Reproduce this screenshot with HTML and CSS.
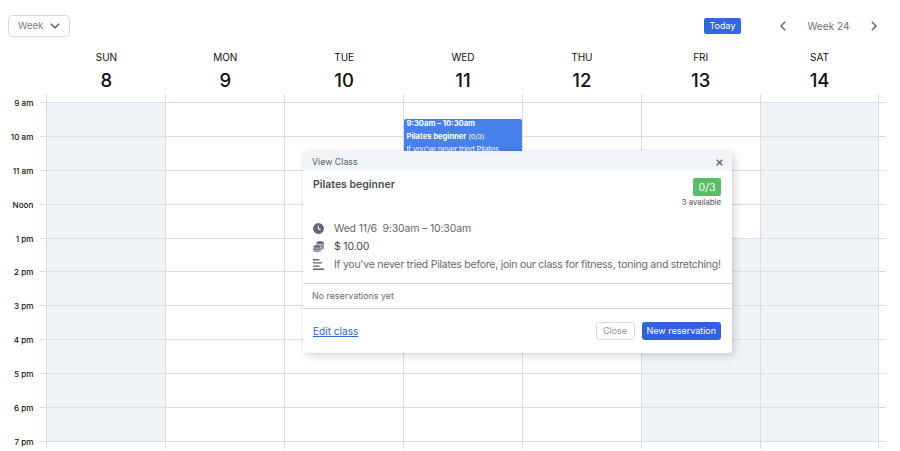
FILE: index.html
```html
<!DOCTYPE html>
<html lang="en">
<head>
<meta charset="utf-8">
<title>Class calendar</title>
<link rel="stylesheet" href="styles.css">
</head>
<body>
<header class="toolbar">
  <button class="view-select">Week
    <svg width="10" height="6" viewBox="0 0 10 6"><path d="M.8.8 5 4.9 9.2.8"/></svg>
  </button>
  <button class="today">Today</button>
  <nav class="pager">
    <svg width="6" height="10" viewBox="0 0 6 10"><path d="M5.2.8 1 5l4.2 4.2"/></svg>
    <span>Week 24</span>
    <svg width="6" height="10" viewBox="0 0 6 10"><path d="M.8.8 5 5 .8 9.2"/></svg>
  </nav>
</header>
<div class="days">
  <div class="day"><span>SUN</span><strong>8</strong></div>
  <div class="day"><span>MON</span><strong>9</strong></div>
  <div class="day"><span>TUE</span><strong>10</strong></div>
  <div class="day"><span>WED</span><strong>11</strong></div>
  <div class="day"><span>THU</span><strong>12</strong></div>
  <div class="day"><span>FRI</span><strong>13</strong></div>
  <div class="day"><span>SAT</span><strong>14</strong></div>
</div>
<main class="schedule">
  <div class="row edge"><b></b><i></i><i></i><i></i><i></i><i></i><i></i><i></i><i class="end"></i></div>
  <div class="row"><b>9 am</b><i class="off"></i><i></i><i></i><i></i><i></i><i></i><i class="off"></i><i class="end"></i></div>
  <div class="row"><b>10 am</b><i class="off"></i><i></i><i></i><i></i><i></i><i></i><i class="off"></i><i class="end"></i></div>
  <div class="row"><b>11 am</b><i class="off"></i><i></i><i></i><i></i><i></i><i></i><i class="off"></i><i class="end"></i></div>
  <div class="row"><b>Noon</b><i class="off"></i><i></i><i></i><i></i><i></i><i></i><i class="off"></i><i class="end"></i></div>
  <div class="row"><b>1 pm</b><i class="off"></i><i></i><i></i><i></i><i></i><i class="off"></i><i class="off"></i><i class="end"></i></div>
  <div class="row"><b>2 pm</b><i class="off"></i><i></i><i></i><i></i><i></i><i class="off"></i><i class="off"></i><i class="end"></i></div>
  <div class="row"><b>3 pm</b><i class="off"></i><i></i><i></i><i></i><i></i><i class="off"></i><i class="off"></i><i class="end"></i></div>
  <div class="row"><b>4 pm</b><i class="off"></i><i></i><i></i><i></i><i></i><i class="off"></i><i class="off"></i><i class="end"></i></div>
  <div class="row"><b>5 pm</b><i class="off"></i><i></i><i></i><i></i><i></i><i class="off"></i><i class="off"></i><i class="end"></i></div>
  <div class="row"><b>6 pm</b><i class="off"></i><i></i><i></i><i></i><i></i><i class="off"></i><i class="off"></i><i class="end"></i></div>
  <div class="row last"><b>7 pm</b><i></i><i></i><i></i><i></i><i></i><i></i><i></i><i class="end"></i></div>
  <article class="event">
    <div class="event-line"><strong>9:30am – 10:30am</strong></div>
    <div class="event-line"><strong>Pilates beginner</strong> <small>(0/3)</small></div>
    <div class="event-line event-text">If you've never tried Pilates</div>
  </article>
</main>
<section class="dialog">
  <header class="dialog-head">
    <span>View Class</span>
    <svg class="close-icon" width="7" height="7" viewBox="0 0 7 7"><path d="m.7.7 5.6 5.6M6.3.7.7 6.3"/></svg>
  </header>
  <div class="dialog-body">
    <div class="summary">
      <h1>Pilates beginner</h1>
      <div class="capacity"><span class="badge">0/3</span><span class="available">3 available</span></div>
    </div>
    <div class="detail">
      <svg width="11" height="11" viewBox="0 0 11 11"><circle cx="5.5" cy="5.5" r="5.4" fill="#60667c"/><path d="M5.4 2.400v3.300l2 1.300" fill="none" stroke="#fff" stroke-width="1.100"/></svg>
      <span class="when">Wed 11/6&nbsp; 9:30am – 10:30am</span>
    </div>
    <div class="detail">
      <svg width="11" height="11" viewBox="0 0 11 11"><path d="M3.200 1.900C3.200-.3 11-.3 11 1.900V7c0 .9-1 1.500-2.600 1.700L3.200 5z" fill="#60667c"/><path d="M3.200 2.500c1 1.500 6.800 1.500 7.800 0M7 5.200c1.800 0 3.400-.4 4-1.100M8 7.300c1.400-.1 2.600-.5 3-1" fill="none" stroke="#fff" stroke-width=".6"/><path d="M0 5.500c0-2.100 8-2.100 8 0v4c0 2.100-8 2.100-8 0z" fill="#60667c" stroke="#fff" stroke-width=".4"/><path d="M0 6.200c1 1.400 7 1.400 8 0M0 8.400c1 1.400 7 1.400 8 0" fill="none" stroke="#fff" stroke-width=".6"/></svg>
      <span class="price">$ 10.00</span>
    </div>
    <div class="detail">
      <svg width="11" height="11" viewBox="0 0 11 11"><path d="M0 .8h6.500M0 3.900h9M0 7.100h6.500M0 10.200h11" stroke="#60667c" stroke-width="1.400"/></svg>
      <span class="about">If you've never tried Pilates before, join our class for fitness, toning and stretching!</span>
    </div>
  </div>
  <div class="reservations">No reservations yet</div>
  <footer class="dialog-foot">
    <a class="edit">Edit class</a>
    <button class="close">Close</button>
    <button class="primary">New reservation</button>
  </footer>
</section>
</body>
</html>
```
FILE: styles.css
```css
* { box-sizing: border-box; }
body { margin: 0; height: 451px; overflow: hidden; background: #fff; font-family: Inter, sans-serif; color: #202124; position: relative; }
button { font-family: inherit; margin: 0; padding: 0; }
svg { display: block; flex: none; }
.toolbar { display: flex; align-items: center; height: 51px; padding: 0 23px 0 8px; }
.toolbar svg { fill: none; stroke: #666a70; stroke-width: 1.5; }
.view-select { width: 62px; height: 22px; display: flex; align-items: center; justify-content: space-between; padding: 0 9px; border: 1px solid #d8dade; border-radius: 4px; background: #fff; color: #777b80; font-size: 9.500px; }
.today { margin-left: auto; width: 37px; height: 16px; border: 0; border-radius: 2px; background: #3466df; color: #fff; font-size: 9px; }
.pager { width: 97px; margin-left: 39px; display: flex; align-items: center; justify-content: space-between; font-size: 10.100px; color: #707378; }
.days { display: grid; grid-template-columns: repeat(7, 1fr); margin: 0 21px 0 47px; height: 43px; }
.day { display: flex; flex-direction: column; align-items: center; color: #111; }
.day span { font-size: 10px; line-height: 12px; }
.day strong { font-size: 18.500px; line-height: 24px; font-weight: 450; margin-top: 5px; }
.schedule { position: relative; }
.row { display: grid; grid-template-columns: 46.400px repeat(7, 118.870px) 7px; height: 33.900px; background: linear-gradient(#d9dddf, #d9dddf) 40px 0 / 846px 1px no-repeat; }
.row.edge { height: 8px; background: none; }
.row.last { height: 8px; }
.row b { font-size: 8.100px; line-height: 12px; font-weight: 450; text-align: right; padding-right: 13px; margin-top: -5px; white-space: nowrap; color: #111; }
.row i { border-left: 1px solid #d9dddf; }
.row .off { background: rgba(223, 231, 240, .47); }
.event { position: absolute; left: 404px; top: 25px; width: 118px; height: 58px; background: #4780eb; color: #fff; border-radius: 2px; padding: 0 2.500px; font-size: 7.600px; overflow: hidden; }
.event-line { height: 12.800px; line-height: 9px; white-space: nowrap; }
.event-line strong { font-weight: 700; }
.event-text { letter-spacing: -.18px; }
.event small { font-size: 6.800px; }
.dialog { position: absolute; left: 303px; top: 151px; width: 429px; height: 202px; display: flex; flex-direction: column; background: #fff; border-radius: 3px; box-shadow: 3px 3px 8px rgba(0, 0, 0, .15), 0 0 4px rgba(0, 0, 0, .05); color: #666970; }
.dialog-head { height: 20px; display: flex; justify-content: space-between; align-items: center; padding: 0 9px; background: #f1f5f9; font-size: 8.800px; border-radius: 3px 3px 0 0; color: #575c66; }
.close-icon { fill: none; stroke: #5e6268; stroke-width: 1.400; margin-top: 3px; }
.dialog-body { height: 112px; padding: 7px 11px 0 10px; }
.summary { display: flex; justify-content: space-between; height: 42px; }
h1 { margin: 0; font-size: 10.500px; line-height: 13px; font-weight: 600; color: #494d55; }
.capacity { display: flex; flex-direction: column; align-items: flex-end; }
.badge { width: 28px; height: 18px; border-radius: 2px; background: #5bbc67; color: #fff; text-align: center; font-size: 10.500px; line-height: 19px; }
.available { font-size: 7.800px; line-height: 13px; color: #4d5057; }
.detail { display: flex; align-items: center; gap: 10px; height: 17.700px; font-size: 10.500px; white-space: nowrap; }
.when { letter-spacing: -.16px; }
.about { letter-spacing: -.25px; }
.price { color: #45484f; letter-spacing: -.16px; }
.reservations { height: 26px; border-top: 1px solid #d6d8da; border-bottom: 1px solid #d6d8da; padding-left: 9px; font-size: 8.900px; line-height: 24px; }
.dialog-foot { flex: 1; display: flex; align-items: center; padding: 0 11px 0 10px; }
.edit { color: #3466cf; text-decoration: underline; font-size: 10.100px; margin-right: auto; }
.close, .primary { height: 18px; border-radius: 3px; font-size: 9px; padding-bottom: 1px; }
.close { width: 39px; border: 1px solid #d8dade; background: #fff; color: #92959b; margin-right: 7px; }
.primary { width: 79.500px; border: 0; background: #3062e0; color: #fff; }
```
